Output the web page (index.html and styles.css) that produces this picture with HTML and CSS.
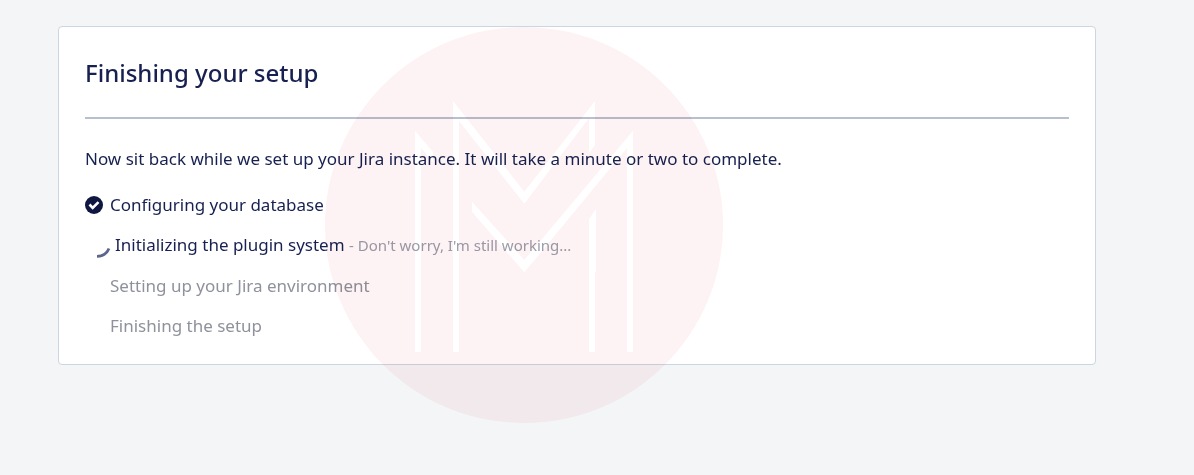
FILE: index.html
```html
<!DOCTYPE html>
<html lang="en">
<head>
  <meta charset="UTF-8" />
  <meta name="viewport" content="width=device-width, initial-scale=1.0"/>
  <title>Jira setup</title>
  <link rel="stylesheet" href="styles.css">
</head>
<body>
  <main class="panel">
    <h1>Finishing your setup</h1>
    <p class="intro">Now sit back while we set up your Jira instance. It will take a minute or two to complete.</p>

    <ul class="steps">
      <li class="step done">
        <svg class="icon" viewBox="0 0 18 18" aria-hidden="true">
          <circle cx="9" cy="9" r="9" fill="#0f1740"/>
          <path d="M4.500 8.500l3.200 3.400 5.800-5.800" fill="none" stroke="#fff" stroke-width="2.6"/>
        </svg>
        <span>Configuring your database</span>
      </li>
      <li class="step active">
        <svg class="spinner" viewBox="0 0 16 18" aria-hidden="true">
          <path d="M1 16.3C7 16.3 11 13.500 13 8.500" fill="none" stroke="#5a668c" stroke-width="2.8"/>
        </svg>
        <span>Initializing the plugin system <small>- Don't worry, I'm still working...</small></span>
      </li>
      <li class="step">Setting up your Jira environment</li>
      <li class="step">Finishing the setup</li>
    </ul>

    <svg class="watermark" viewBox="325 27 398 396" aria-hidden="true">
      <ellipse cx="524" cy="225" rx="199" ry="198" fill="#fdf3f4"/>
      <g fill="#fff">
        <path d="M415 130.700L433 152V162L421 148V352H415Z"/>
        <path d="M453 101L524.300 191.700L595 101V145L589 153V118L524.300 203.700L459 121V352H453Z"/>
        <path d="M472 201.700L524.300 260L633 130.700V352H627V148L524.300 272.300L472 211.700Z"/>
        <path d="M596 209L589 219V352H595V272H596Z"/>
      </g>
    </svg>
  </main>
</body>
</html>
```
FILE: styles.css
```css
html {
  min-height: 100vh;
  background: #f4f5f7;
}

body {
  box-sizing: border-box;
  min-height: 100vh;
  margin: 0;
  padding: 26px 98px 52px 58px;
  background: #f4f5f7;
  color: #172050;
  font-family: 'Noto Sans', 'Segoe UI', sans-serif;
  font-size: 17px;
  line-height: 24px;
}

.panel {
  position: relative;
  padding: 26px;
  border: 1px solid #cbd6e2;
  border-radius: 4px;
  background: #fff;
}

h1 {
  margin: 0 0 28px;
  padding: 4px 0 28px;
  border-bottom: 2px solid #b8bfce;
  font-size: 24px;
  font-weight: 500;
  line-height: 32px;
}

.intro {
  margin: 0 0 22px;
}

.steps {
  display: flex;
  flex-direction: column;
  gap: 16px;
  margin: 0;
  padding: 0;
  list-style: none;
}

.step {
  padding-left: 25px;
  color: #8f919c;
}

.done,
.active {
  display: flex;
  align-items: center;
  padding-left: 0;
  color: #172050;
}

.active {
  align-items: flex-start;
}

.icon {
  width: 18px;
  height: 18px;
  margin-right: 7px;
}

.spinner {
  width: 16px;
  height: 18px;
  margin: 7px 3px 0 11px;
}

small {
  color: #9a9daa;
  font-size: 15px;
}

.watermark {
  position: absolute;
  top: 0;
  left: 266px;
  width: 398px;
  height: 396px;
  mix-blend-mode: multiply;
  pointer-events: none;
}
```
